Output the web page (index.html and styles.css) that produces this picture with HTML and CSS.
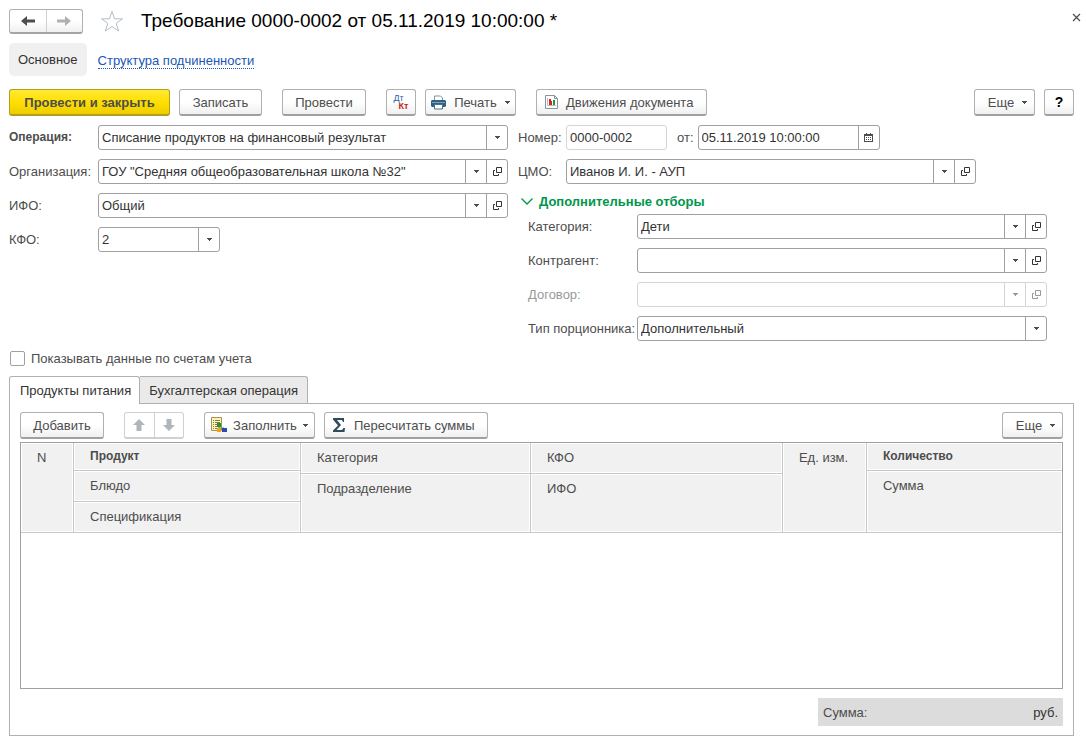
FILE: index.html
```html
<!DOCTYPE html>
<html lang="ru">
<head>
<meta charset="utf-8">
<meta name="viewport" content="width=device-width, initial-scale=1">
<title>Требование 0000-0002</title>
<link rel="stylesheet" href="styles.css">
</head>
<body>
<svg class="defs" aria-hidden="true">
  <symbol id="caret" viewBox="0 0 5 3"><path d="M0 0h5v1H4v1H3v1H2V2H1V1H0z" fill="currentColor"/></symbol>
  <symbol id="open" viewBox="0 0 9 9"><path d="M3.500.5h5v5h-5zM2 3.500H.5v5h5V7" fill="none" stroke="currentColor"/></symbol>
</svg>
<main class="page">
  <header class="head">
    <div class="nav">
      <button class="nav-btn" type="button" aria-label="Назад"><svg width="14" height="10" viewBox="0 0 14 10"><path d="M0 5l6-5v3.500h8v3H6V10z" fill="#4d4d4d"/></svg></button>
      <button class="nav-btn nav-next" type="button" aria-label="Вперед"><svg width="14" height="10" viewBox="0 0 14 10"><path d="M14 5L8 0v3.500H0v3h8V10z" fill="#b0b0b0"/></svg></button>
    </div>
    <button class="star" type="button" aria-label="В избранное"><svg width="24" height="23" viewBox="0 0 24 23"><path d="M12 1.500l2.600 7.300h7.900l-6.300 4.700 2.400 7.600-6.600-4.600-6.600 4.600 2.400-7.600-6.300-4.700h7.900z" fill="none" stroke="#b5bcc3"/></svg></button>
    <h1>Требование 0000-0002 от 05.11.2019 10:00:00 *</h1>
    <button class="close" type="button" aria-label="Закрыть"><svg width="9" height="9" viewBox="0 0 9 9"><path d="M1 1l7 7M8 1L1 8" stroke="#4d4d4d" stroke-width="1.200"/></svg></button>
  </header>

  <nav class="sections">
    <a class="section-current" href="#main">Основное</a>
    <a class="section-link" href="#structure">Структура подчиненности</a>
  </nav>

  <div class="toolbar">
    <button class="btn primary" type="button">Провести и закрыть</button>
    <button class="btn save" type="button">Записать</button>
    <button class="btn medium spaced" type="button">Провести</button>
    <button class="btn square spaced" type="button" aria-label="Дебет и кредит"><span class="dtkt"><span class="dt">Дт</span><span class="kt">Кт</span></span></button>
    <button class="btn print" type="button">
      <svg width="15" height="15" viewBox="0 0 15 15"><path d="M3.500 6V1h6l2 2v3" fill="#fff" stroke="#7d93a3"/><path d="M1 5h13l1 1v5l-1 1H1l-1-1V6z" fill="#2f5f83"/><path d="M1 7.500h13" stroke="#7fa3bd"/><path d="M3.500 9.500h8v4.500h-8z" fill="#fff" stroke="#4c6f88"/></svg>
      Печать<svg class="caret" aria-hidden="true"><use href="#caret"/></svg></button>
    <button class="btn moves spaced" type="button">
      <svg width="13" height="14" viewBox="0 0 13 14"><path d="M.5.5h9l3 3v10H.5z" fill="#fff" stroke="#8494a0"/><path d="M9.500.5v3h3" fill="none" stroke="#8494a0"/><path d="M2.500 3v7.500H11" fill="none" stroke="#b5bec6"/><path d="M4 4h2v6H4z" fill="#e0201b"/><path d="M6 6h1v4H6z" fill="#e0201b"/><path d="M8 5h2v5H8z" fill="#159a36"/></svg>
      Движения документа</button>
    <button class="btn more push" type="button">Еще<svg class="caret" aria-hidden="true"><use href="#caret"/></svg></button>
    <button class="btn square help" type="button" aria-label="Справка">?</button>
  </div>

  <form class="form">
    <div class="column">
      <div class="row">
        <label class="label strong" for="op">Операция:</label>
        <div class="field"><div class="pick"><select id="op"><option>Списание продуктов на финансовый результат</option></select><span class="arrow"><svg class="caret"><use href="#caret"/></svg></span></div></div>
      </div>
      <div class="row">
        <label class="label" for="org">Организация:</label>
        <div class="field"><div class="pick"><select id="org"><option>ГОУ "Средняя общеобразовательная школа №32"</option></select><span class="arrow"><svg class="caret"><use href="#caret"/></svg></span></div><button class="cell" type="button" aria-label="Открыть"><svg class="open"><use href="#open"/></svg></button></div>
      </div>
      <div class="row">
        <label class="label" for="ifo">ИФО:</label>
        <div class="field"><div class="pick"><select id="ifo"><option>Общий</option></select><span class="arrow"><svg class="caret"><use href="#caret"/></svg></span></div><button class="cell" type="button" aria-label="Открыть"><svg class="open"><use href="#open"/></svg></button></div>
      </div>
      <div class="row">
        <label class="label" for="kfo">КФО:</label>
        <div class="field short"><div class="pick"><select id="kfo"><option>2</option></select><span class="arrow"><svg class="caret"><use href="#caret"/></svg></span></div></div>
      </div>
    </div>

    <div class="column">
      <div class="row">
        <label class="label narrow" for="num">Номер:</label>
        <div class="field number"><input id="num" type="text" value="0000-0002" readonly></div>
        <label class="label from" for="date">от:</label>
        <div class="field date"><input id="date" type="text" value="05.11.2019 10:00:00"><button class="cell" type="button" aria-label="Календарь"><svg width="9" height="9" viewBox="0 0 9 9"><path d="M0 1h2V0h1v1h3V0h1v1h2v8H0z" fill="#4d4d4d"/><path d="M1 3h7v5H1z" fill="#fff"/><path d="M2 4.500h1m1 0h1m1 0h1M2 6.500h1m1 0h1m1 0h1" stroke="#4d4d4d"/></svg></button></div>
      </div>
      <div class="row">
        <label class="label narrow" for="cmo">ЦМО:</label>
        <div class="field"><div class="pick"><select id="cmo"><option>Иванов И. И. - АУП</option></select><span class="arrow"><svg class="caret"><use href="#caret"/></svg></span></div><button class="cell" type="button" aria-label="Открыть"><svg class="open"><use href="#open"/></svg></button></div>
      </div>
      <section class="group">
        <button class="group-title" type="button" aria-expanded="true"><svg width="12" height="7" viewBox="0 0 12 7"><path d="M.5.5L6 6l5.500-5.500" fill="none" stroke="#00964b" stroke-width="1.300"/></svg>Дополнительные отборы</button>
        <div class="row">
          <label class="label wide" for="cat">Категория:</label>
          <div class="field"><div class="pick"><select id="cat"><option>Дети</option></select><span class="arrow"><svg class="caret"><use href="#caret"/></svg></span></div><button class="cell" type="button" aria-label="Открыть"><svg class="open"><use href="#open"/></svg></button></div>
        </div>
        <div class="row">
          <label class="label wide" for="agent">Контрагент:</label>
          <div class="field"><div class="pick"><select id="agent"><option></option></select><span class="arrow"><svg class="caret"><use href="#caret"/></svg></span></div><button class="cell" type="button" aria-label="Открыть"><svg class="open"><use href="#open"/></svg></button></div>
        </div>
        <div class="row off">
          <label class="label wide" for="deal">Договор:</label>
          <div class="field"><div class="pick"><select id="deal" disabled><option></option></select><span class="arrow"><svg class="caret"><use href="#caret"/></svg></span></div><button class="cell" type="button" aria-label="Открыть" disabled><svg class="open"><use href="#open"/></svg></button></div>
        </div>
        <div class="row">
          <label class="label wide" for="kind">Тип порционника:</label>
          <div class="field"><div class="pick"><select id="kind"><option>Дополнительный</option></select><span class="arrow"><svg class="caret"><use href="#caret"/></svg></span></div></div>
        </div>
      </section>
    </div>
  </form>

  <label class="check"><input type="checkbox">Показывать данные по счетам учета</label>

  <div class="tabs" role="tablist">
    <button class="tab active" type="button" role="tab" aria-selected="true">Продукты питания</button>
    <button class="tab" type="button" role="tab" aria-selected="false">Бухгалтерская операция</button>
  </div>

  <section class="panel">
    <div class="toolbar inner">
      <button class="btn medium" type="button">Добавить</button>
      <div class="move spaced">
        <button type="button" aria-label="Вверх" disabled><svg width="12" height="12" viewBox="0 0 12 12"><path d="M6 0l6 6H8.500v6h-5V6H0z" fill="#aeb6bb"/></svg></button>
        <button type="button" aria-label="Вниз" disabled><svg width="12" height="12" viewBox="0 0 12 12"><path d="M6 12l6-6H8.500V0h-5v6H0z" fill="#aeb6bb"/></svg></button>
      </div>
      <button class="btn fill spaced" type="button">
        <svg width="16" height="16" viewBox="0 0 16 16"><path d="M.5.5h10v13H.5z" fill="#fbf3b5" stroke="#a3935a"/><path d="M2 3.500h1m1 0h5M2 5.500h1m1 0h5M2 7.500h1m1 0h2M2 9.500h1m1 0h2M2 11.500h1m1 0h2" stroke="#867b4e"/><path d="M6 6h4v4H6z" fill="#21962b"/><path d="M8 10v2m0-1h5v1" fill="none" stroke="#777"/><path d="M6 11h4v4H6z" fill="#f2a31b"/><path d="M11 11h5v4h-5z" fill="#1f4fb5"/></svg>
        Заполнить<svg class="caret" aria-hidden="true"><use href="#caret"/></svg></button>
      <button class="btn recalc" type="button">
        <svg width="12" height="14" viewBox="0 0 12 14"><path d="M0 0h11v4h-1L9 2H4l4 5-4.500 5H9l1.500-2H12l-.5 4H0v-1.500L5 7.500 0 1.500z" fill="#2f4a5c"/></svg>
        Пересчитать суммы</button>
      <button class="btn more push" type="button">Еще<svg class="caret" aria-hidden="true"><use href="#caret"/></svg></button>
    </div>

    <div class="grid">
      <table>
        <colgroup><col class="c-num"><col class="c-product"><col class="c-category"><col class="c-kfo"><col class="c-unit"><col></colgroup>
        <thead>
          <tr class="r-main">
            <th rowspan="4">N</th><th class="strong">Продукт</th><th rowspan="2">Категория</th><th rowspan="2">КФО</th><th rowspan="4">Ед. изм.</th><th class="strong">Количество</th>
          </tr>
          <tr class="r-step"><th rowspan="2">Блюдо</th><th rowspan="3">Сумма</th></tr>
          <tr class="r-main"><th rowspan="2">Подразделение</th><th rowspan="2">ИФО</th></tr>
          <tr class="r-last"><th>Спецификация</th></tr>
        </thead>
      </table>
    </div>

    <div class="total"><span>Сумма:</span><span class="currency">руб.</span></div>
  </section>
</main>
</body>
</html>
```

FILE: styles.css
```css
* { box-sizing: border-box; }

body {
  margin: 0;
  background: #fff;
  color: #4d4d4d;
  font: 13px/15px "Liberation Sans", Arial, sans-serif;
}

button, input, select { font: inherit; color: inherit; }
button { padding: 0; background: none; border: 0; }
svg { display: block; flex: none; }
.defs { position: absolute; width: 0; height: 0; }
.caret { width: 5px; height: 3px; }
.open { width: 9px; height: 9px; }

.page {
  display: flex;
  flex-direction: column;
  min-height: 100vh;
  padding: 8px 12px 9px 9px;
}

/* Title bar */
.head { display: flex; align-items: center; height: 26px; }
.nav {
  display: flex;
  width: 74px;
  height: 25px;
  border: 1px solid #b0b0b0;
  border-bottom: 2px solid #a5a5a5;
  border-radius: 3px;
  background: linear-gradient(#fff 50%, #f0f0f0);
}
.nav-btn { flex: 1; display: grid; place-items: center; }
.nav-next { border-left: 1px solid #d0d0d0; }
.star { margin-left: 17px; }
h1 {
  flex: 1;
  margin: 0 0 0 17px;
  color: #000;
  font-size: 19px;
  font-weight: normal;
  line-height: 26px;
}
.close { align-self: flex-start; margin: 5px -7px 0 0; }

/* Section links */
.sections { display: flex; align-items: center; gap: 11px; margin-top: 9px; }
.section-current {
  padding: 9px;
  border-radius: 5px;
  background: #f0f0f0;
  color: #333;
  line-height: 15px;
  text-decoration: none;
}
.section-link {
  margin-top: 3px;
  color: #1a57b5;
  text-decoration: none;
  border-bottom: 1px dotted #1a57b5;
  line-height: 14px;
}

/* Command bars */
.toolbar { display: flex; gap: 9px; margin-top: 13px; }
.btn {
  display: flex;
  align-items: center;
  justify-content: center;
  height: 27px;
  border: 1px solid #b0b0b0;
  border-bottom: 2px solid #a0a0a0;
  border-radius: 3px;
  background: linear-gradient(#fff 50%, #f0f0f0);
  white-space: nowrap;
}
.primary {
  min-width: 161px;
  border-color: #b39e1c;
  background: linear-gradient(#ffe935, #ffdf00 50%, #eecd00);
  font-weight: bold;
}
.medium { min-width: 84px; }
.save { min-width: 83px; }
.square { min-width: 30px; }
.print { min-width: 91px; gap: 8px; }
.moves { min-width: 171px; gap: 8px; justify-content: flex-start; padding: 0 8px; }
.more { min-width: 61px; gap: 8px; padding-left: 6px; }
.fill { min-width: 111px; gap: 6px; }
.recalc { min-width: 164px; gap: 9px; justify-content: flex-start; padding: 0 8px; }
.spaced { margin-left: 11px; }
.push { margin-left: auto; }
.help { color: #000; font-size: 14px; font-weight: bold; }
.dtkt {
  display: flex;
  flex-direction: column;
  width: 15px;
  font-size: 9px;
  line-height: 8px;
}
.dt { align-self: flex-start; color: #2d5ea8; }
.kt { align-self: flex-end; color: #c42313; font-weight: bold; }

/* Document fields */
.form {
  display: grid;
  grid-template-columns: minmax(0, 499fr) minmax(0, 529fr);
  gap: 10px;
  max-width: 1038px;
  margin-top: 9px;
}
.column { display: flex; flex-direction: column; gap: 9px; }
.row { display: flex; align-items: center; }
.label { flex: none; width: 89px; white-space: nowrap; }
.strong { font-size: 12px; font-weight: bold; }
.narrow { width: 48px; }
.from { width: auto; margin: 0 4px 0 10px; }
.wide { width: 109px; }
.field {
  display: flex;
  flex: 0 1 410px;
  min-width: 0;
  height: 25px;
  border: 1px solid #a0a0a0;
  border-radius: 3px;
  color: #333;
}
.short { flex-basis: 122px; }
.number { flex-basis: 101px; border-color: #d5d5d5; }
.date { flex-basis: 182px; }
.field input, .field select {
  flex: 1;
  width: 100%;
  min-width: 0;
  padding: 0 3px;
  border: 0;
  outline: 0;
  background: none;
  appearance: none;
}
.pick { display: grid; flex: 1; min-width: 0; }
.pick > * { grid-area: 1 / 1; }
.pick select { padding-right: 24px; }
.arrow, .cell {
  display: grid;
  place-items: center;
  width: 21px;
  border-left: 1px solid #a0a0a0;
  color: #4d4d4d;
}
.cell { color: #333; }
.arrow { justify-self: end; pointer-events: none; }
.off { color: #999; }
.off .field, .off .arrow, .off .cell { border-color: #d5d5d5; color: #999; }

.group { display: flex; flex-direction: column; gap: 9px; padding-left: 10px; }
.group-title {
  display: flex;
  align-items: center;
  gap: 6px;
  margin: 0 0 -5px -7px;
  color: #00964b;
  font-weight: bold;
  line-height: 17px;
}

.check { display: flex; align-items: center; gap: 6px; margin-top: 10px; align-self: flex-start; }
.check input {
  width: 15px;
  height: 15px;
  margin: 0 0 0 1px;
  border: 1px solid #a0a0a0;
  border-radius: 2px;
  appearance: none;
}

/* Tabs */
.tabs { display: flex; margin-top: 10px; }
.tab {
  height: 27px;
  padding: 0 9px;
  border: 1px solid #b0b0b0;
  border-width: 1px 1px 0 0;
  border-radius: 0 3px 0 0;
  background: #eaeaea;
  color: #333;
}
.tab.active {
  z-index: 1;
  height: 28px;
  margin-bottom: -1px;
  padding: 0 8px 0 10px;
  border-left-width: 1px;
  border-radius: 3px 3px 0 0;
  background: #fff;
}
.panel {
  display: flex;
  flex: 1;
  flex-direction: column;
  padding: 8px 10px 9px;
  border: 1px solid #b0b0b0;
}
.inner { margin-top: 0; }
.move {
  display: flex;
  width: 60px;
  border: 1px solid #d0d0d0;
  border-bottom-width: 2px;
  border-radius: 3px;
}
.move button { display: grid; place-items: center; flex: 1; }
.move button + button { border-left: 1px solid #d0d0d0; }

/* Product list */
.grid { flex: 1; margin-top: 3px; border: 1px solid #a0a0a0; }
table { width: 100%; border-spacing: 0; table-layout: fixed; }
.c-num { width: 53px; }
.c-product { width: 21.8%; }
.c-category { width: 22.1%; }
.c-kfo { width: 24.2%; }
.c-unit { width: 84px; }
.r-main { height: 28px; }
.r-step { height: 3px; }
.r-last { height: 31px; }
th {
  padding: 7px 15px 0 16px;
  border: 1px solid #c8c8c8;
  border-width: 0 1px 1px 0;
  background: #f1f1f1;
  box-shadow: inset 0 0 0 1px #fff;
  font-weight: normal;
  text-align: left;
  vertical-align: top;
}
th.strong { padding-top: 6px; font-weight: bold; }
tr:first-child th:last-child, .r-step th:last-child { border-right: 0; }

.total {
  display: flex;
  align-items: center;
  justify-content: space-between;
  align-self: flex-end;
  width: 245px;
  max-width: 100%;
  height: 28px;
  margin-top: 9px;
  padding: 0 5px;
  background: #dcdcdc;
}
.currency { color: #333; }
```
